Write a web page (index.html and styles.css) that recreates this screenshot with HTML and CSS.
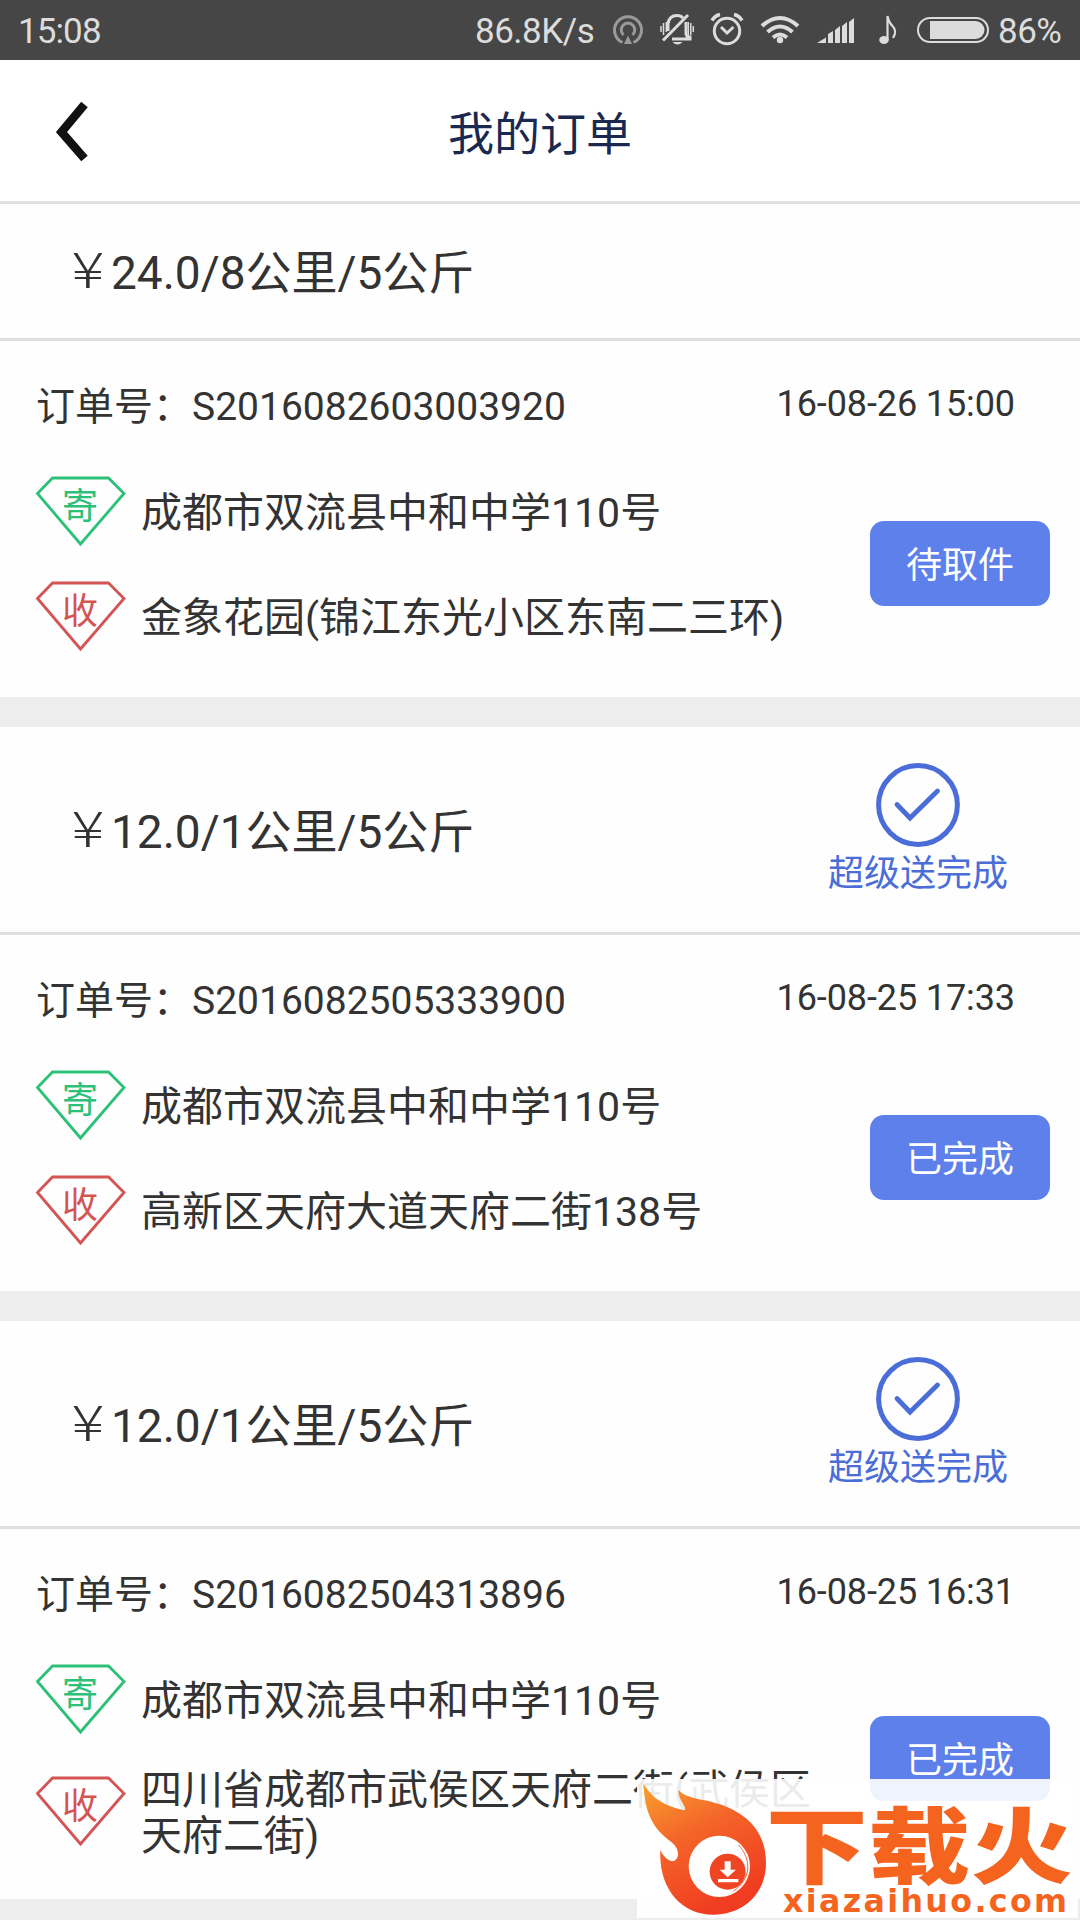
FILE: index.html
```html
<!DOCTYPE html>
<html lang="zh-CN">
<head>
<meta charset="utf-8">
<title>我的订单</title>
<link rel="stylesheet" href="styles.css">
</head>
<body>
<svg class="defs" width="0" height="0">
  <symbol id="gem" viewBox="0 0 92 72"><path d="M2.5 18.5 17.5 3H73.5L89 18.5 45.5 69Z" fill="none" stroke="currentColor" stroke-width="2.8"/></symbol>
  <symbol id="done" viewBox="0 0 84 84"><g fill="none" stroke="currentColor" stroke-width="5"><circle cx="42" cy="42" r="39.4"/><path d="M21 41.5 34 55 61.500 28" stroke-width="4.800" stroke-linecap="round"/></g></symbol>
</svg>
<header class="status">
  <span class="clock">15:08</span>
  <span class="speed">86.8K/s</span>
  <svg class="icons" width="380" height="60" viewBox="610 0 380 60" fill="none" stroke="#dcdcdc">
    <g stroke="#9a9a9a" stroke-width="3"><path d="M622.500 42.500A13.500 13.500 0 1 1 633.500 42.500"/><path d="M623.500 35A6.800 6.800 0 1 1 632.500 35"/><path d="M628 35.500l4 8.500h-8z" fill="#9a9a9a" stroke="none"/></g>
    <g stroke-width="3"><path d="M668 31V24q1-8.500 9-8.500 4 0 6 2.500M686 22v11q0 4 4 4v2h-18"/><path d="M663 40.500 688 15"/><path d="M661 26v6M663.500 23v12M666.300 22v10M688.300 22v13M690.800 23v12M693.300 26v6" stroke-width="1.500"/><path d="M672.500 42h10q-5 5-10 0z" fill="#dcdcdc" stroke="none"/></g>
    <g stroke-width="3"><circle cx="727" cy="31" r="12.700"/><path d="M721 27l6 6 6.500-6"/><path d="M712 20.500q3-5 8-6M742 20.500q-3-5-8-6" stroke-width="3.500"/></g>
    <g stroke-width="4"><path d="M762 26q18-16 36 0M767.500 32q12.500-11 25 0M773 37.500q7-6 14 0"/><circle cx="780" cy="40" r="3.200" fill="#dcdcdc" stroke="none"/></g>
    <path d="M817 43l9-5.500v5.500zM828 43V34l5-3v12zM835 43V30l5-4v17zM842 43V26l5-4v21zM849 43V22l5-4v25z" fill="#dcdcdc" stroke="none"/>
    <path d="M887.500 40V16q1 6 5 10 5 5 .5 12" stroke-width="2.200"/><ellipse cx="884" cy="40" rx="4.800" ry="4" fill="#dcdcdc" stroke="none"/>
    <rect x="918" y="18" width="70" height="24" rx="12" stroke-width="2"/><path d="M930 21h45.500a9 9 0 0 1 0 18h-45.500z" fill="#dcdcdc" stroke="none"/>
  </svg>
  <span class="battery">86%</span>
</header>
<nav class="bar">
  <svg class="back" width="34" height="60" viewBox="0 0 34 60"><path d="M28.500 3.500 5.500 31 28.500 57.500" fill="none" stroke="#111" stroke-width="8.500"/></svg>
  <h1 class="title">我的订单</h1>
</nav>
<main>
  <section class="card">
    <div class="summary"><p class="price"><span class="yen">¥</span>24.0/8公里/5公斤</p></div>
    <div class="meta"><p class="number">订单号：S2016082603003920</p><time class="time">16-08-26 15:00</time></div>
    <div class="body">
      <ul class="stops">
        <li class="stop"><span class="mark send"><svg class="gem"><use href="#gem"/></svg><b class="tag">寄</b></span><span class="place">成都市双流县中和中学110号</span></li>
        <li class="stop"><span class="mark receive"><svg class="gem"><use href="#gem"/></svg><b class="tag">收</b></span><span class="place">金象花园(锦江东光小区东南二三环)</span></li>
      </ul>
      <button class="state">待取件</button>
    </div>
  </section>
  <section class="card">
    <div class="summary tall"><p class="price"><span class="yen">¥</span>12.0/1公里/5公斤</p><div class="finish"><svg class="check"><use href="#done"/></svg><span class="caption">超级送完成</span></div></div>
    <div class="meta"><p class="number">订单号：S2016082505333900</p><time class="time">16-08-25 17:33</time></div>
    <div class="body">
      <ul class="stops">
        <li class="stop"><span class="mark send"><svg class="gem"><use href="#gem"/></svg><b class="tag">寄</b></span><span class="place">成都市双流县中和中学110号</span></li>
        <li class="stop"><span class="mark receive"><svg class="gem"><use href="#gem"/></svg><b class="tag">收</b></span><span class="place">高新区天府大道天府二街138号</span></li>
      </ul>
      <button class="state">已完成</button>
    </div>
  </section>
  <section class="card">
    <div class="summary tall"><p class="price"><span class="yen">¥</span>12.0/1公里/5公斤</p><div class="finish"><svg class="check"><use href="#done"/></svg><span class="caption">超级送完成</span></div></div>
    <div class="meta"><p class="number">订单号：S2016082504313896</p><time class="time">16-08-25 16:31</time></div>
    <div class="body">
      <ul class="stops">
        <li class="stop"><span class="mark send"><svg class="gem"><use href="#gem"/></svg><b class="tag">寄</b></span><span class="place">成都市双流县中和中学110号</span></li>
        <li class="stop"><span class="mark receive"><svg class="gem"><use href="#gem"/></svg><b class="tag">收</b></span><span class="place">四川省成都市武侯区天府二街(武侯区天府二街)</span></li>
      </ul>
      <button class="state">已完成</button>
    </div>
  </section>
</main>
<aside class="stamp">
  <svg width="441" height="139" viewBox="51 267 1323 417">
    <defs><linearGradient id="fire" x1="0" y1="0" x2=".5" y2="1"><stop offset="0" stop-color="#f9a12c"/><stop offset=".45" stop-color="#f4652a"/><stop offset="1" stop-color="#f03c20"/></linearGradient></defs>
    <path d="M70 280C95 325 135 350 195 361 200 350 172 325 176 300 200 330 260 325 320 350 400 385 438 440 438 520 438 610 370 674 280 674 180 674 115 590 121 480 132 505 150 515 162 513 180 505 178 475 155 457 90 410 75 360 70 280Z" fill="url(#fire)"/>
    <circle cx="298" cy="529" r="92" fill="#fff"/>
    <path d="M355 464C396 510 394 566 340 604" fill="none" stroke="#f4643c" stroke-width="3"/>
    <circle cx="323" cy="545" r="54" fill="#f04522"/>
    <path d="M314 514h18v25h16l-25 23-24-23h15zM294 567h61v10h-61z" fill="#fff"/>
    <g class="brand"><text class="name" transform="translate(437 560) scale(1 .81)" textLength="921">下载火</text><text class="site" x="489" y="665" textLength="852">xiazaihuo.com</text></g>
  </svg>
</aside>
</body>
</html>
```
FILE: styles.css
```css
* { box-sizing: border-box; margin: 0; padding: 0; }
body { position: relative; width: 1080px; height: 1920px; overflow: hidden; background: #ededed; color: #333; font-family: Roboto, "Noto Sans CJK SC", sans-serif; }
.defs { position: absolute; }
.status { display: flex; align-items: center; height: 60px; padding-left: 18px; background: #464646; color: #dcdcdc; font-size: 35px; line-height: 60px; white-space: nowrap; }
.clock { width: 457px; padding-top: 3px; letter-spacing: -.9px; }
.speed { width: 135px; padding-top: 3px; letter-spacing: -.5px; }
.icons { flex: none; width: 380px; height: 60px; }
.battery { padding: 3px 0 0 8px; letter-spacing: -.5px; }
.bar { display: grid; grid-template-columns: 180px 1fr 180px; align-items: center; height: 144px; background: #fff; border-bottom: 3px solid #e0e0e0; }
.back { margin-left: 56px; }
.title { padding-bottom: 2px; color: #1b2850; font-size: 46px; font-weight: 400; text-align: center; }
.card { margin-bottom: 30px; background: #fefefe; }
.summary { display: flex; justify-content: space-between; align-items: center; height: 137px; padding: 0 72px 0 65px; border-bottom: 3px solid #e0e0e0; }
.tall { height: 208px; }
.price { padding-bottom: 4px; font-size: 46px; white-space: nowrap; }
.yen { display: inline-block; width: 46px; font-family: "Noto Sans CJK SC", sans-serif; font-weight: 300; font-size: 49px; line-height: 46px; text-align: center; transform: translateY(-1px) scaleX(1.25); }
.finish { display: flex; flex-direction: column; align-items: center; color: #4a6dd8; }
.check { width: 84px; height: 84px; }
.caption { height: 50px; padding-top: 3px; font-size: 36px; line-height: 48px; }
.meta { display: flex; justify-content: space-between; align-items: center; height: 130px; padding: 0 65px 0 36px; }
.number { padding-bottom: 7px; font-size: 39px; }
.time { padding-bottom: 4px; font-size: 36px; letter-spacing: -.1px; }
.body { display: flex; justify-content: space-between; align-items: center; padding: 0 30px 41px 35px; }
.stops { display: grid; gap: 25px; list-style: none; }
.stop { display: flex; align-items: center; gap: 14px; min-height: 80px; }
.mark { display: grid; place-items: center; width: 92px; height: 72px; margin-bottom: 1px; }
.gem, .tag { grid-area: 1 / 1; }
.gem { width: 92px; height: 72px; }
.tag { padding: 0 2px 8px 0; font-size: 36px; font-weight: 400; line-height: 40px; }
.send { color: #2dc078; }
.receive { color: #d45454; }
.place { width: 680px; padding-top: 3px; margin-bottom: -1px; font-size: 41px; line-height: 46px; }
.state { flex: none; width: 180px; height: 85px; padding-bottom: 3px; border: 0; border-radius: 14px; background: #5e80eb; color: #fff; font: inherit; font-size: 36px; }
.stamp { position: absolute; left: 637px; top: 1779px; width: 441px; height: 139px; background: rgba(255, 255, 255, .9); }
.stamp svg { display: block; overflow: visible; }
.brand { fill: #f4641e; }
.name { font: 900 306px "Noto Sans CJK SC", sans-serif; }
.site { font: 700 95px "DejaVu Sans", sans-serif; }
```
